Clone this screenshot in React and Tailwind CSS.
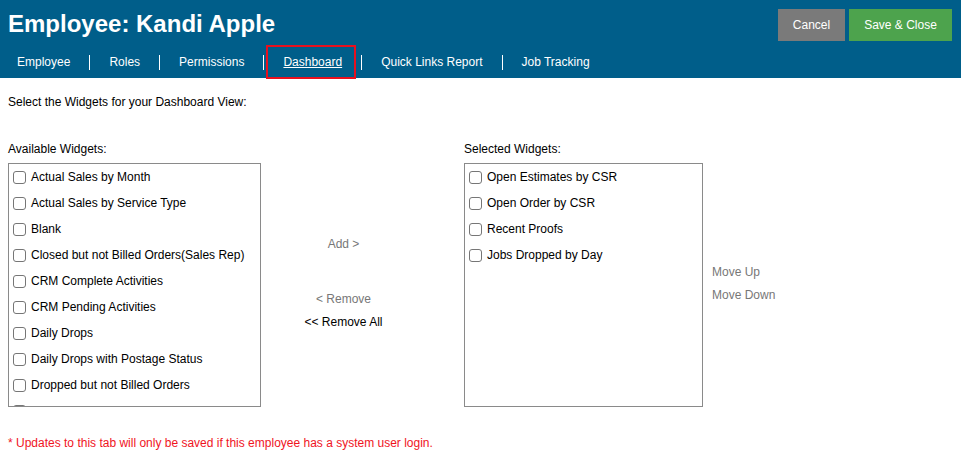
import { useState } from 'react'

const TABS = ['Employee', 'Roles', 'Permissions', 'Dashboard', 'Quick Links Report', 'Job Tracking']

const AVAILABLE = [
  'Actual Sales by Month',
  'Actual Sales by Service Type',
  'Blank',
  'Closed but not Billed Orders(Sales Rep)',
  'CRM Complete Activities',
  'CRM Pending Activities',
  'Daily Drops',
  'Daily Drops with Postage Status',
  'Dropped but not Billed Orders',
  'Estimates by Month',
]

const SELECTED = ['Open Estimates by CSR', 'Open Order by CSR', 'Recent Proofs', 'Jobs Dropped by Day']

function WidgetRow({ label, checked, onToggle }) {
  return (
    <label className="flex items-center h-[26px] pl-[4px] cursor-pointer">
      <span
        onClick={onToggle}
        className={`w-[13px] h-[13px] rounded-[3px] border border-[#767676] mr-[5px] shrink-0 ${checked ? 'bg-[#0075ff] border-[#0075ff]' : 'bg-white'}`}
      />
      <span className="text-[12px] text-black whitespace-nowrap">{label}</span>
    </label>
  )
}

function WidgetList({ items, width }) {
  const [checked, setChecked] = useState({})
  const toggle = (i) => setChecked(c => ({ ...c, [i]: !c[i] }))
  return (
    <div className={`${width} h-[244px] border border-[#8a8a8a] overflow-hidden`}>
      {items.map((it, i) => (
        <WidgetRow key={it} label={it} checked={!!checked[i]} onToggle={() => toggle(i)} />
      ))}
    </div>
  )
}

export default function App() {
  const [active, setActive] = useState('Dashboard')

  return (
    <div className="w-[961px] h-[459px] bg-white font-['Liberation_Sans',Arial,sans-serif] overflow-hidden">
      {/* Header */}
      <div className="h-[78px] bg-[#005e8a] relative">
        <div className="flex justify-between items-start">
          <h1 className="text-white font-bold text-[24px] leading-none pl-[8px] pt-[12px]">Employee: Kandi Apple</h1>
          <div className="flex gap-[4px] pt-[9px] pr-[9px]">
            <button className="h-[32px] w-[67px] bg-[#7a7a7a] text-white text-[12px]">Cancel</button>
            <button className="h-[32px] w-[103px] bg-[#4da34d] text-white text-[12px]">Save &amp; Close</button>
          </div>
        </div>

        {/* Tabs */}
        <div className="flex items-start h-[33px] mt-[4px] text-white text-[12px]">
          {TABS.map((t, i) => (
            <div key={t} className="flex items-start h-full">
              {i > 0 && <div className="w-px h-[15px] bg-white mt-[10px]" />}
              {t === active ? (
                <div className="pl-[2px] pr-[5px]">
                  <button
                    onClick={() => setActive(t)}
                    className="h-[34px] border-2 border-[#e8101e] pl-[15px] pr-[12px] underline"
                  >
                    {t}
                  </button>
                </div>
              ) : (
                <button
                  onClick={() => setActive(t)}
                  className={`h-[33px] pr-[19px] ${i === 0 ? 'pl-[17px]' : 'pl-[19px]'}`}
                >
                  {t}
                </button>
              )}
            </div>
          ))}
        </div>
      </div>

      {/* Body */}
      <div className="px-[8px] text-[12px] leading-[18px] text-black">
        <p className="pt-[15px]">Select the Widgets for your Dashboard View:</p>

        <div className="flex mt-[31px]">
          <div>
            <p className="mb-[7px] leading-[14px]">Available Widgets:</p>
            <WidgetList items={AVAILABLE} width="w-[253px]" />
          </div>

          <div className="w-[165px] flex flex-col items-center pt-[93px]">
            <button className="text-[#777]">Add &gt;</button>
            <button className="text-[#777] mt-[37px]">&lt; Remove</button>
            <button className="text-black mt-[5px]">&lt;&lt; Remove All</button>
          </div>

          <div className="ml-[38px]">
            <p className="mb-[7px] leading-[14px]">Selected Widgets:</p>
            <WidgetList items={SELECTED} width="w-[239px]" />
          </div>

          <div className="flex flex-col pl-[9px] pt-[121px] text-[#777]">
            <button className="text-left">Move Up</button>
            <button className="text-left mt-[5px]">Move Down</button>
          </div>
        </div>

        <p className="mt-[27px] text-[#f0141e]">* Updates to this tab will only be saved if this employee has a system user login.</p>
      </div>
    </div>
  )
}
